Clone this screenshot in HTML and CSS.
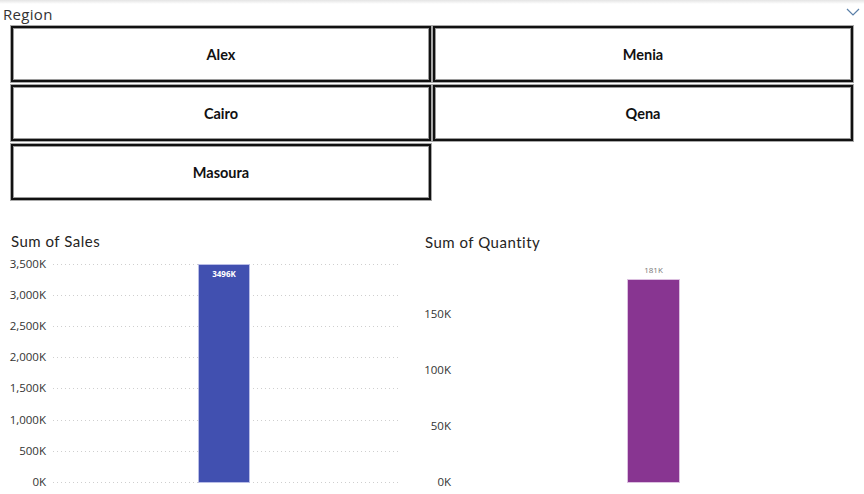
FILE: index.html
```html
<!DOCTYPE html>
<html>
<head>
<meta charset="utf-8">
<link rel="stylesheet" href="styles.css">
</head>
<body>
<div class="topshade"></div>
<section class="slicer">
  <div class="slicer-head">
    <span class="slicer-title">Region</span>
    <svg class="chev" width="14" height="8" viewBox="0 0 14 8"><path d="M1 1 L7 7 L13 1" fill="none" stroke="#5a7fa8" stroke-width="1.2"/></svg>
  </div>
  <div class="tiles">
    <div class="tile">Alex</div>
    <div class="tile">Menia</div>
    <div class="tile">Cairo</div>
    <div class="tile">Qena</div>
    <div class="tile">Masoura</div>
  </div>
</section>
<section class="charts">
  <div class="chart chart-left">
    <div class="chart-title">Sum of Sales</div>
    <svg class="plot" width="415" height="244" viewBox="0 0 415 244">
      <g class="grid">
        <line x1="53" x2="399" y1="231.5" y2="231.5"/>
        <line x1="53" x2="399" y1="200.5" y2="200.5"/>
        <line x1="53" x2="399" y1="169.5" y2="169.5"/>
        <line x1="53" x2="399" y1="137.5" y2="137.5"/>
        <line x1="53" x2="399" y1="106.5" y2="106.5"/>
        <line x1="53" x2="399" y1="75.5" y2="75.5"/>
        <line x1="53" x2="399" y1="44.5" y2="44.5"/>
        <line x1="53" x2="399" y1="13.5" y2="13.5"/>
      </g>
      <g class="ylab">
        <text x="46" y="235">0K</text>
        <text x="46" y="203.8">500K</text>
        <text x="46" y="172.6">1,000K</text>
        <text x="46" y="141.4">1,500K</text>
        <text x="46" y="110.2">2,000K</text>
        <text x="46" y="79.1">2,500K</text>
        <text x="46" y="47.9">3,000K</text>
        <text x="46" y="16.7">3,500K</text>
      </g>
      <rect class="bar-sales" x="198.5" y="13.5" width="51" height="218"/>
      <text class="lab-in" x="224" y="26">3496K</text>
    </svg>
  </div>
  <div class="chart chart-right">
    <div class="chart-title">Sum of Quantity</div>
    <svg class="plot" width="449" height="244" viewBox="0 0 449 244">
      <g class="ylab">
        <text x="36" y="235">0K</text>
        <text x="36" y="179">50K</text>
        <text x="36" y="123">100K</text>
        <text x="36" y="67">150K</text>
      </g>
      <rect class="bar-qty" x="212.5" y="28.5" width="52" height="203"/>
      <text class="lab-out" x="238.5" y="22">181K</text>
    </svg>
  </div>
</section>
</body>
</html>
```
FILE: styles.css
```css
html, body {
  margin: 0;
  padding: 0;
  background: #ffffff;
}
body {
  width: 864px;
  height: 494px;
  overflow: hidden;
  font-family: "Lato", "Liberation Sans", sans-serif;
  color: #252423;
}
.topshade {
  height: 4px;
  background: linear-gradient(#e4e4e4, #ffffff);
}
.slicer-head {
  height: 22px;
  display: flex;
  align-items: center;
  justify-content: space-between;
  padding: 0 4px 0 3px;
}
.slicer-title {
  font-family: "Open Sans", sans-serif;
  font-size: 15px;
  letter-spacing: 0.3px;
  color: #333333;
  line-height: 20px;
  margin-top: -2px;
}
.chev {
  margin-top: -6px;
}
.tiles {
  display: grid;
  grid-template-columns: 420px 420px;
  grid-auto-rows: 56px;
  column-gap: 2px;
  row-gap: 3px;
  padding: 0 11px;
}
.tile {
  box-sizing: border-box;
  border: 2px solid #111111;
  box-shadow: 0 0 0 1px #a8a8a8, inset 0 0 0 1px #9a9a9a;
  display: flex;
  align-items: center;
  justify-content: center;
  font-family: "Lato", sans-serif;
  font-weight: 700;
  font-size: 14.5px;
  color: #111111;
}
.charts {
  display: flex;
  margin-top: 31px;
}
.chart-left {
  width: 415px;
}
.chart-right {
  width: 449px;
}
.chart-title {
  height: 20px;
  font-family: "Lato", sans-serif;
  font-size: 15px;
  letter-spacing: 0.5px;
  line-height: 20px;
  color: #252423;
}
.chart-left .chart-title {
  padding-left: 11px;
}
.chart-right .chart-title {
  padding-left: 10px;
  margin-top: 1px;
  margin-bottom: -1px;
}
.plot {
  display: block;
}
.grid line {
  stroke: #cfcfcf;
  stroke-width: 1;
  stroke-dasharray: 1 3;
}
.ylab text {
  font-family: "Open Sans", sans-serif;
  font-size: 11.5px;
  fill: #333333;
  text-anchor: end;
}
.bar-sales {
  fill: #4150b0;
  stroke: #b9bde6;
  stroke-width: 1;
}
.bar-qty {
  fill: #883591;
  stroke: #dcc0e0;
  stroke-width: 1;
}
.lab-in {
  font-family: "Open Sans", sans-serif;
  font-size: 8px;
  font-weight: 700;
  fill: #ffffff;
  text-anchor: middle;
}
.lab-out {
  font-family: "Open Sans", sans-serif;
  font-size: 8px;
  fill: #777777;
  text-anchor: middle;
}
```
